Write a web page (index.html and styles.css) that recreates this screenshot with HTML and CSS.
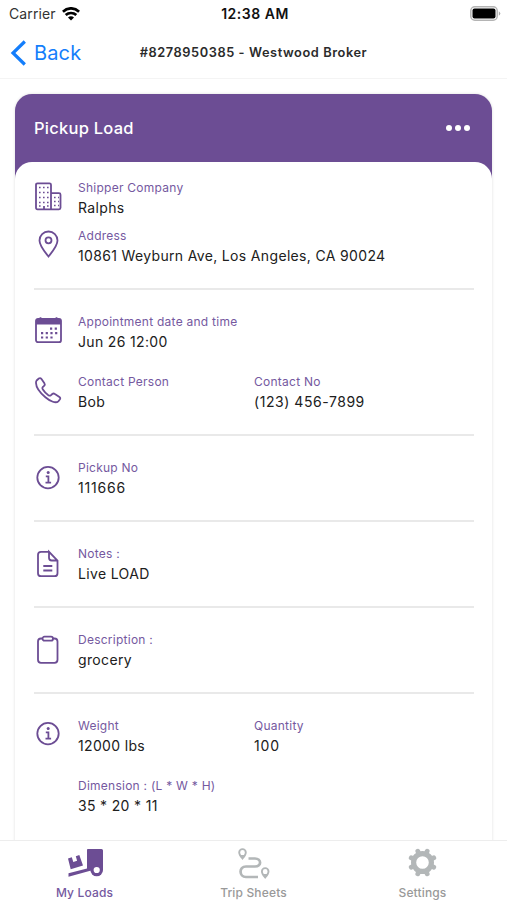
FILE: index.html
```html
<!DOCTYPE html>
<html lang="en">
<head>
<meta charset="utf-8">
<title>Pickup Load</title>
<link rel="stylesheet" href="styles.css">
</head>
<body>
<div class="app">
  <header class="status">
    <div class="carrier"><span>Carrier</span>
      <svg width="18" height="14" viewBox="0 0 18 14" fill="none" stroke="#000" stroke-width="2.7"><path d="M.9 4.7C5.6.2 12.4.2 17.1 4.7"/><path d="M3.7 8.1c3-2.800 7.600-2.800 10.600 0"/><path d="M6 10.400c1.700-1.500 4.300-1.500 6 0L9 13.500z" fill="#000" stroke="none"/></svg>
    </div>
    <span class="clock">12:38 AM</span>
    <svg class="battery" width="31" height="15" viewBox="0 0 31 15"><rect x=".8" y=".8" width="26.400" height="13.400" rx="4" fill="#fff" stroke="#b4b4b4" stroke-width="1.500"/><rect x="2.500" y="2.500" width="23" height="10" rx="2" fill="#000"/><path d="M28.800 5.200q3 2.300 0 4.600z" fill="#aaa"/></svg>
  </header>
  <nav class="navbar">
    <a class="back"><svg width="17" height="26" viewBox="0 0 17 26" fill="none" stroke="#147efb" stroke-width="3.200"><path d="M14.800 1.500 3 13l11.800 11.500"/></svg><span>Back</span></a>
    <h1>#8278950385 - Westwood Broker</h1>
  </nav>
  <main>
    <article class="card">
      <div class="card-head"><h2>Pickup Load</h2><div class="dots"><i></i><i></i><i></i></div></div>
      <div class="card-body">
        <section>
          <div class="row">
            <svg class="icon" viewBox="0 0 28 40"><path d="M2 6.800q0-1.500 1.500-1.500h12q1.500 0 1.500 1.500v8.400h8q1.500 0 1.500 1.500v13.100q0 1.500-1.500 1.500H3.500q-1.500 0-1.500-1.500zM17 15.200v16"/><path class="grid" d="M5 9.500h10M5 14.500h10M5 19.500h10M5 24.500h10M5 28h2M13 28h2M20 19.500h5M20 23.500h5M20 27.500h5"/><path d="M10 31v-3"/></svg>
            <div class="field"><label>Shipper Company</label><p>Ralphs</p></div>
          </div>
          <div class="row tight">
            <svg class="icon" viewBox="0 0 28 40"><path d="M14.500 30.500C11 26 5.500 20 5.500 14.500a9 9 0 0 1 18 0C23.500 20 18 26 14.500 30.500z"/><circle cx="14.500" cy="14.300" r="3"/></svg>
            <div class="field"><label>Address</label><p>10861 Weyburn Ave, Los Angeles, CA 90024</p></div>
          </div>
        </section>
        <section>
          <div class="row">
            <svg class="icon" viewBox="0 0 28 40"><rect x="2" y="6.800" width="25" height="23.400" rx="2"/><path d="M2 7h25v5.500H2z" fill="currentColor" stroke="none"/><path d="M6.500 5.300v2M22.500 5.300v2"/><path stroke-width="2.200" stroke-dasharray="2.200 2.500" d="M16 16.700h7M7 21.200h16.500M7 25.500h12"/></svg>
            <div class="field"><label>Appointment date and time</label><p>Jun 26 12:00</p></div>
          </div>
          <div class="row loose">
            <svg class="icon" viewBox="0 0 28 40"><path d="M2.600 8.500 4.800 6.500Q6.300 5.500 7.500 7l2.900 4.300q1 1.500-.3 2.600l-1.400 1.300q-.8.900 0 2.100 2.200 3.600 5.700 5.900 1.500.9 2.400.1l1.500-1.300q1.200-1 2.600 0l4.500 3q1.500 1.100.4 2.500l-1.500 1.800c-2.400 2.200-7.900.3-12.900-4C6.200 20.900 2.100 15.500 2 11q-.1-1.500.6-2.500z"/></svg>
            <div class="field"><label>Contact Person</label><p>Bob</p></div>
            <div class="field"><label>Contact No</label><p class="phone">(123) 456-7899</p></div>
          </div>
        </section>
        <section>
          <div class="row">
            <svg class="icon" viewBox="0 0 28 40"><circle cx="14" cy="19.600" r="10.700"/><circle cx="14.200" cy="14.600" r="1.500" fill="currentColor" stroke="none"/><path d="M11.800 18.300h2.600v6.200M11.500 24.700h5.600"/></svg>
            <div class="field"><label>Pickup No</label><p class="num">111666</p></div>
          </div>
        </section>
        <section>
          <div class="row">
            <svg class="icon" viewBox="0 0 28 40"><path d="M15 7.800H7q-3 0-3 3v18.400q0 3 3 3h13.500q3 0 3-3V16.500L15 7.800v6q0 2.700 2.700 2.700h5.800"/><path d="M9.300 22h9M9.300 26.500h9"/></svg>
            <div class="field"><label>Notes :</label><p>Live LOAD</p></div>
          </div>
        </section>
        <section>
          <div class="row">
            <svg class="icon" viewBox="0 0 28 40"><path d="M8.500 8.500H7q-3 0-3 3v18.300q0 3 3 3h13.500q3 0 3-3V11.500q0-3-3-3H19"/><rect x="8.500" y="6.700" width="10.500" height="4" rx="2"/></svg>
            <div class="field"><label>Description :</label><p>grocery</p></div>
          </div>
        </section>
        <section>
          <div class="row">
            <svg class="icon" viewBox="0 0 28 40"><circle cx="14" cy="17.600" r="10.700"/><circle cx="14.200" cy="12.600" r="1.500" fill="currentColor" stroke="none"/><path d="M11.800 16.300h2.600v6.200M11.500 22.700h5.600"/></svg>
            <div class="field"><label>Weight</label><p>12000 lbs</p></div>
            <div class="field"><label>Quantity</label><p class="num">100</p></div>
          </div>
          <div class="row loose">
            <span class="icon"></span>
            <div class="field"><label>Dimension : (L * W * H)</label><p>35 * 20 * 11</p></div>
          </div>
        </section>
      </div>
    </article>
  </main>
  <footer class="tabs">
    <a class="tab active">
      <svg width="40" height="32" viewBox="0 0 40 32"><path d="M22.500 1H36.500q1.500 0 1.500 1.500V22h-10L3.500 28.800v-3.600l18.500-4.800v-17.900Q22 1 22.500 1z" fill="currentColor"/><circle cx="31.700" cy="22" r="6.300" fill="currentColor"/><circle cx="31.700" cy="22" r="3.100" fill="#fff"/><path d="m3 10.500 3.800-1.200 1.500 4.600 3.800-1.200-1.300-4.500 3.500-1.200L18 17.500 5.700 21.200z" fill="currentColor"/></svg>
      <span>My Loads</span></a>
    <a class="tab">
      <svg width="40" height="32" viewBox="0 0 40 32" fill="none" stroke="currentColor"><path d="M14.500 10.500h6.500c6.500 0 7 8 0 8h-9c-7.500 0-7 10.500 0 10.500h12" stroke-width="2.700"/><path d="M8.500 10.500C6 7.500 5.200 6.500 5.200 4.400a3.300 3.300 0 0 1 6.600 0c0 2.100-.8 3.100-3.300 6.100zM31.200 29.500c-2.500-3-3.300-4-3.300-6.100a3.300 3.300 0 0 1 6.600 0c0 2.100-.8 3.100-3.300 6.100z" stroke-width="1.900"/><path d="M6.500 7.500h4l-2 3zM29.200 26.500h4l-2 3z" fill="currentColor"/></svg>
      <span>Trip Sheets</span></a>
    <a class="tab">
      <svg width="40" height="32" viewBox="0 0 40 32"><g fill="none" stroke="currentColor" transform="translate(19.500 14.500)"><circle r="8.900" stroke-width="5.200"/><path d="M-4.700-11.300-4.300-10.300M4.700-11.300 4.300-10.300M11.300-4.700 10.300-4.300M11.300 4.700 10.300 4.300M4.700 11.300 4.300 10.300M-4.700 11.300-4.300 10.300M-11.300 4.700-10.300 4.300M-11.300-4.700-10.300-4.300" stroke-width="4.800" stroke-linecap="round"/></g></svg>
      <span>Settings</span></a>
  </footer>
</div>
</body>
</html>
```
FILE: styles.css
```css
* { box-sizing: border-box; }
body, h1, h2, p { margin: 0; }
body {
  font-family: Inter, "Liberation Sans", sans-serif;
  color: #202020;
  background: #fff;
}
.app {
  display: flex;
  flex-direction: column;
  height: 900px;
  overflow: hidden;
}
.status {
  display: grid;
  grid-template-columns: 1fr auto 1fr;
  align-items: center;
  height: 27px;
  padding: 0 6px 0 9px;
  flex: none;
}
.carrier { display: flex; align-items: center; gap: 6px; font-size: 14px; color: #333; letter-spacing: .1px; }
.clock { font-size: 14px; font-weight: 600; color: #111; letter-spacing: .5px; }
.battery { justify-self: end; }
.navbar {
  display: grid;
  grid-template-columns: 1fr auto 1fr;
  align-items: center;
  height: 52px;
  padding: 0 10px;
  border-bottom: 1px solid #f4f4f4;
  flex: none;
}
.back { display: flex; align-items: center; gap: 7px; color: #147efb; font-size: 20px; letter-spacing: .15px; }
.navbar h1 { font-size: 12.8px; font-weight: 600; letter-spacing: .57px; line-height: 18px; color: #2b2b2b; }
main { flex: 1; min-height: 0; padding: 15px 15px 0; overflow: hidden; }
.card {
  background: #6c4d94;
  border-radius: 17px;
  box-shadow: 0 0 3px rgba(0, 0, 0, .14);
}
.card-head {
  display: flex;
  align-items: center;
  justify-content: space-between;
  height: 68px;
  padding: 0 22px 0 19px;
}
.card-head h2 { font-size: 16.5px; font-weight: 500; letter-spacing: .25px; color: #fff; }
.dots { display: flex; gap: 3px; }
.dots i { width: 6px; height: 6px; border-radius: 50%; background: #fff; }
.card-body { background: #fff; border-radius: 17px 17px 0 0; padding: 0 18px 20px 19px; }
section { padding: 22px 0; border-bottom: 2px solid #e9e9e9; }
section:first-child { padding-top: 16px; }
section:last-child { border-bottom: 0; }
.row { display: flex; height: 40px; }
.row.tight { margin-top: 8px; }
.row.loose { margin-top: 20px; }
.icon {
  width: 28px;
  height: 40px;
  margin-right: 16px;
  flex: none;
  color: #6c4d94;
  fill: none;
  stroke: currentColor;
  stroke-width: 1.8;
}
.grid { stroke-width: 1.5; stroke-dasharray: 1.6 2.4; }
.field { width: 176px; white-space: nowrap; line-height: 20px; }
.field label { display: block; font-size: 12px; letter-spacing: .25px; color: #75599f; }
.field p { font-size: 14px; letter-spacing: .34px; }
.field .num { letter-spacing: .8px; }
.field .phone { letter-spacing: .55px; }
.tabs {
  display: grid;
  grid-template-columns: repeat(3, 1fr);
  height: 60px;
  border-top: 1px solid #ededed;
  background: #fff;
  flex: none;
}
.tab {
  display: flex;
  flex-direction: column;
  align-items: center;
  padding-top: 7px;
  font-size: 12px;
  font-weight: 500;
  letter-spacing: .15px;
  line-height: 16px;
  color: #b3b7b8;
}
.tab span { margin-top: 5px; color: #999; }
.tab.active { color: #6c4d94; }
.tab.active span { color: #75599f; }
```
